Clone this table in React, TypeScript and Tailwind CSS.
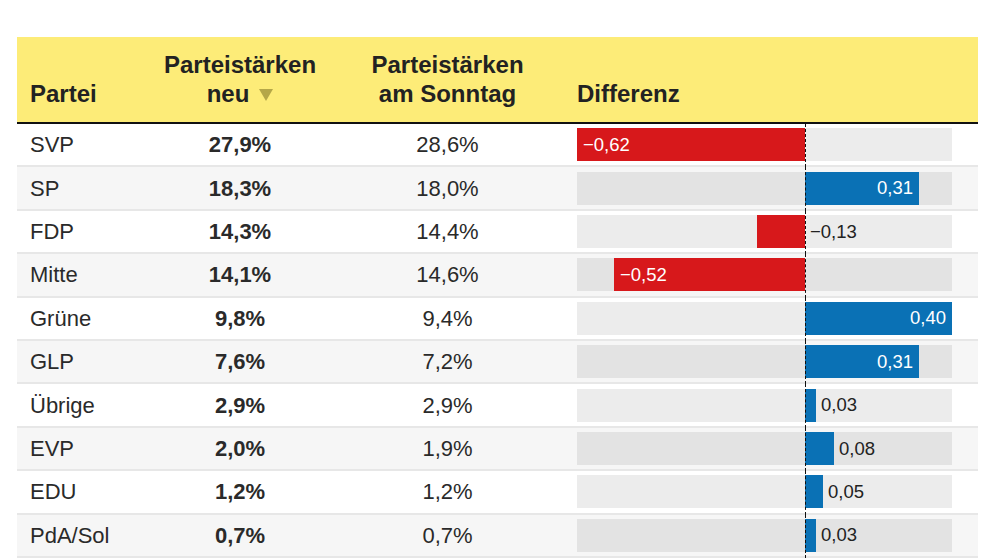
import React from "react";

interface PartyRow {
  name: string;
  neu: string;
  sonntag: string;
  diff: number;
}

const rows: PartyRow[] = [
  { name: "SVP", neu: "27,9%", sonntag: "28,6%", diff: -0.62 },
  { name: "SP", neu: "18,3%", sonntag: "18,0%", diff: 0.31 },
  { name: "FDP", neu: "14,3%", sonntag: "14,4%", diff: -0.13 },
  { name: "Mitte", neu: "14,1%", sonntag: "14,6%", diff: -0.52 },
  { name: "Grüne", neu: "9,8%", sonntag: "9,4%", diff: 0.4 },
  { name: "GLP", neu: "7,6%", sonntag: "7,2%", diff: 0.31 },
  { name: "Übrige", neu: "2,9%", sonntag: "2,9%", diff: 0.03 },
  { name: "EVP", neu: "2,0%", sonntag: "1,9%", diff: 0.08 },
  { name: "EDU", neu: "1,2%", sonntag: "1,2%", diff: 0.05 },
  { name: "PdA/Sol", neu: "0,7%", sonntag: "0,7%", diff: 0.03 },
];

// scale: domain [-0.62, 0.40] over 375px
const PX_PER_UNIT = 367.7;
const NEG_WIDTH = 228;
const POS_WIDTH = 147;

const fmt = (v: number) => {
  const s = Math.abs(v).toFixed(2).replace(".", ",");
  return v < 0 ? `\u2212${s}` : s;
};

function DiffBar({ value }: { value: number }) {
  const w = Math.round(Math.abs(value) * PX_PER_UNIT);
  const inside = w > 60;
  const label = fmt(value);

  return (
    <div className="relative flex h-[33px] w-[375px] bg-black/[0.075] text-[18.5px]">
      <div className="flex h-full justify-end" style={{ width: NEG_WIDTH }}>
        {value < 0 && (
          <div
            className="flex h-full items-center bg-[#d7181b] text-white"
            style={{ width: w }}
          >
            {inside && <span className="pl-[6px]">{label}</span>}
          </div>
        )}
      </div>
      <div className="flex h-full" style={{ width: POS_WIDTH }}>
        {value > 0 && (
          <div
            className="flex h-full items-center justify-end bg-[#0a71b5] text-white"
            style={{ width: w }}
          >
            {inside && <span className="pr-[6px]">{label}</span>}
          </div>
        )}
        {!inside && (
          <span className="flex items-center pl-[5px] text-[#222]">{label}</span>
        )}
      </div>
    </div>
  );
}

export default function App() {
  return (
    <div
      className="h-[559px] w-[994px] overflow-hidden bg-white pt-[37px] pl-[17px] text-[#222]"
      style={{ fontFamily: '"Liberation Sans", Arial, sans-serif' }}
    >
      <div className="w-[961px]">
        {/* Header */}
        <div className="box-border flex h-[87px] items-end border-b-2 border-[#111] bg-[#fdec78] pb-[14px] text-[24px] font-bold leading-[29px] text-[#222]">
          <div className="w-[143px] pl-[13px]">Partei</div>
          <div className="w-[160px] text-center">
            Parteistärken
            <br />
            neu
            <svg
              className="ml-[10px] inline-block align-[1px]"
              width="14"
              height="12"
              viewBox="0 0 14 12"
            >
              <path d="M0 0H14L7 12Z" fill="#b5a748" />
            </svg>
          </div>
          <div className="w-[255px] text-center">
            Parteistärken
            <br />
            am Sonntag
          </div>
          <div className="pl-[2px]">Differenz</div>
        </div>

        {/* Rows */}
        {rows.map((r, i) => (
          <div
            key={r.name}
            className={`flex h-[43.4px] items-center border-b-2 border-[#e7e7e7] text-[22px] text-[#2a2a2a] ${
              i % 2 === 1 ? "bg-[#f6f6f6]" : "bg-white"
            }`}
          >
            <div className="w-[143px] pl-[13px]">{r.name}</div>
            <div className="w-[160px] text-center font-bold">{r.neu}</div>
            <div className="w-[255px] text-center">{r.sonntag}</div>
            <div className="relative flex h-full items-center pl-[2px]">
              <DiffBar value={r.diff} />
              <div className="absolute top-0 bottom-[-2px] left-[230px] border-l border-dashed border-[#111]" />
            </div>
          </div>
        ))}
      </div>
    </div>
  );
}
